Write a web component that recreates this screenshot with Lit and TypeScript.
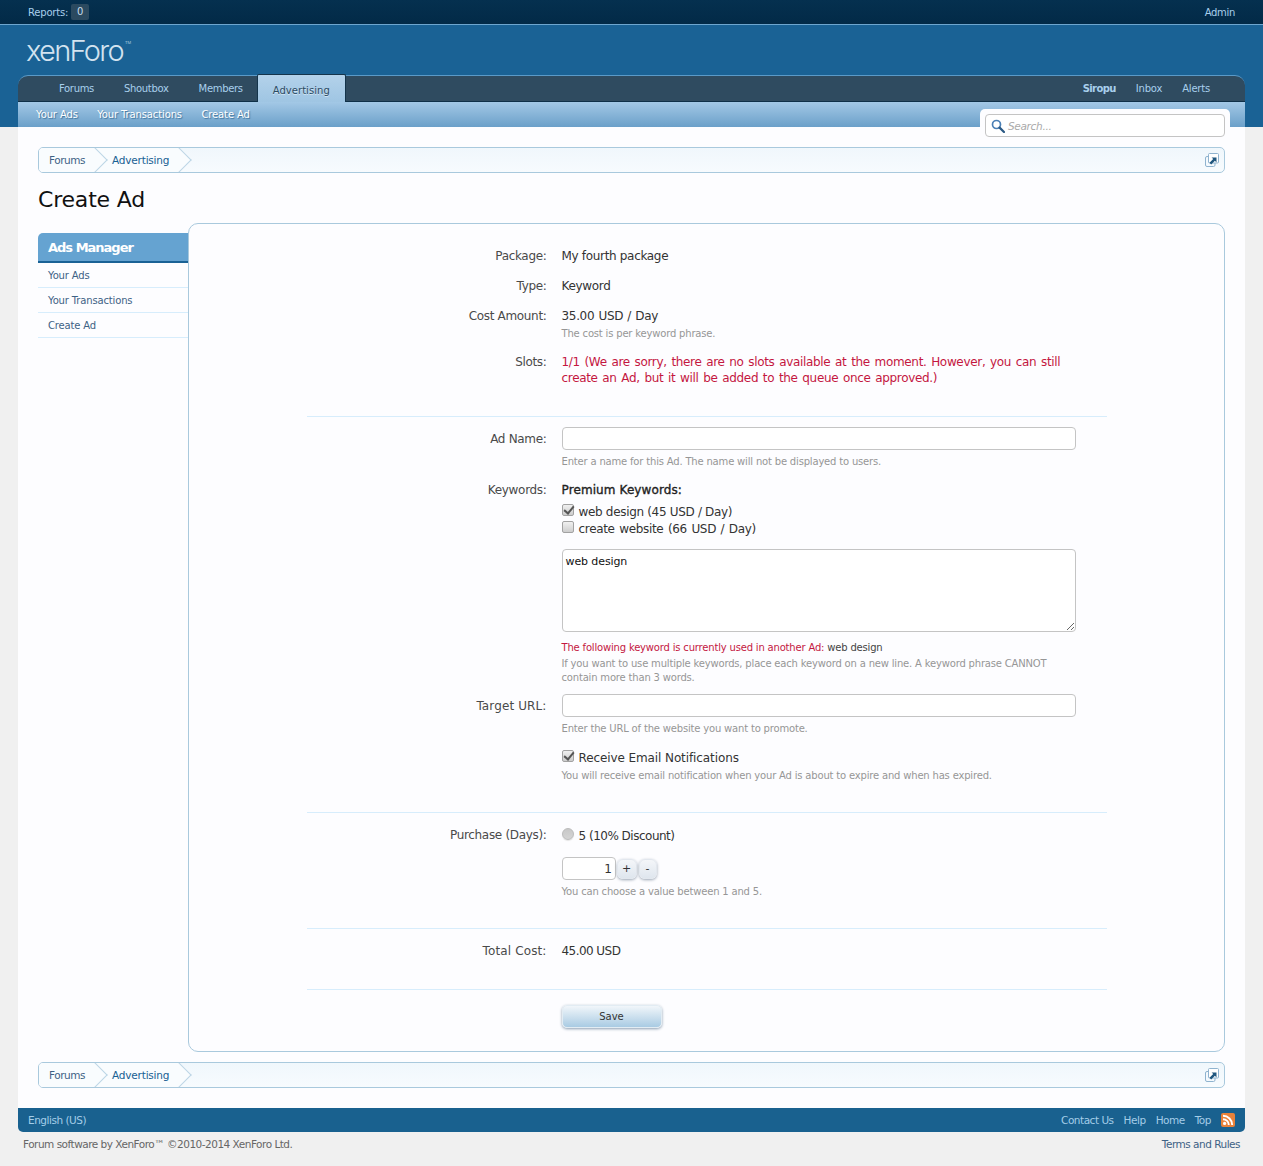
import { LitElement, html, css } from 'lit';
import { customElement } from 'lit/decorators.js';

const extIcon = html`<svg class="ext" width="14" height="14" viewBox="0 0 14 14">
  <rect x="0.5" y="3.5" width="9.5" height="10" rx="1.5" fill="#f4f9fd" stroke="#8fb3cf"/>
  <rect x="3.5" y="0.5" width="10" height="9.5" rx="1" fill="#fff" stroke="#8fb3cf"/>
  <path d="M4.5 9.8 8.2 6.1 6.6 4.5H11.5V9.4L9.9 7.8 6.2 11.5Z" fill="#20577f"/>
</svg>`;

@customElement('app-root')
export class AppRoot extends LitElement {
  static styles = css`
    :host {
      display: block;
      min-height: 1166px;
      background: #f0f0f0;
      font-family: 'DejaVu Sans', Tahoma, sans-serif;
      font-size: 12px;
      letter-spacing: -0.32px;
      color: #333;
    }
    a { color: inherit; text-decoration: none; }

    .topbar {
      height: 24px;
      display: flex;
      align-items: center;
      justify-content: space-between;
      padding: 0 28px;
      background: linear-gradient(#05304f, #022a47);
      border-bottom: 1px solid #6ea6cf;
      color: #a8cfec;
      font-size: 10px;
    }
    .reports { display: flex; align-items: center; gap: 3px; letter-spacing: -0.2px; }
    .badge {
      background: #2b4a60;
      color: #c5dced;
      border-radius: 2px;
      width: 18px;
      height: 16px;
      line-height: 16px;
      text-align: center;
    }

    .header { background: #1a6295; height: 102px; padding: 0 18px; position: relative; }
    .logo {
      height: 50px;
      padding: 2px 0 0 8px;
      box-sizing: border-box;
      font-family: Inter, sans-serif;
      font-weight: 300;
      font-size: 29px;
      letter-spacing: -1.7px;
      line-height: 32px;
      color: #d3e3f0;
    }
    .logo sup { font-size: 4px; letter-spacing: 0; vertical-align: 17px; margin-left: 2px; }
    .tabs {
      height: 27px;
      box-sizing: border-box;
      background: #2f4b60;
      border-radius: 10px 10px 0 0;
      border-top: 1px solid #5a9ac8;
      border-bottom: 1px solid #0f3048;
      display: flex;
      align-items: stretch;
      justify-content: space-between;
      padding-left: 26px;
      padding-right: 35px;
      color: #a8cfec;
      font-size: 10px;
      position: relative;
    }
    .tabs .left { display: flex; }
    .tabs .left a { padding: 0 15px; display: flex; align-items: center; }
    .tabs .left a.active {
      margin: -2px 0 -1px -1px;
      padding: 3px 15px 0;
      background: linear-gradient(#b3d2ea, #9fc5e3);
      border: 1px solid #14344b;
      border-bottom: none;
      border-radius: 2px 2px 0 0;
      color: #2b4a62;
      letter-spacing: 0.05px;
      text-shadow: 0 1px 0 #d4e6f4;
    }
    .tabs .right { display: flex; align-items: center; gap: 20px; letter-spacing: -0.2px; }
    .tabs .right b { letter-spacing: -0.6px; }
    .subnav {
      height: 25px;
      background: linear-gradient(#a3c8e6, #6ba0c9);
      display: flex;
      align-items: center;
      gap: 19.5px;
      padding-left: 18px;
      color: #fff;
      font-size: 10px;
      letter-spacing: -0.13px;
      text-shadow: 1px 1px 1px #3d729b;
    }
    .searchTab {
      position: absolute;
      right: 33px;
      top: 84px;
      width: 240px;
      padding: 5px;
      background: #fdfdff;
      border-radius: 5px 5px 0 0;
    }
    .search {
      height: 23px;
      box-sizing: border-box;
      background: #fff;
      border: 1px solid #c4c4c4;
      border-radius: 4px;
      display: flex;
      align-items: center;
      gap: 3px;
      padding-left: 5px;
      color: #aaa;
      font-style: italic;
      font-size: 10.5px;
    }

    .page {
      margin: 0 18px;
      background: #fdfdff;
      padding: 20px;
    }
    .crumbs {
      height: 26px;
      box-sizing: border-box;
      border: 1px solid #a9c9dd;
      border-radius: 5px;
      background: linear-gradient(#f0f7fc, #f7fbfe);
      display: flex;
      align-items: center;
      justify-content: space-between;
      overflow: hidden;
      padding-right: 5px;
    }
    .crumbs .items { display: flex; height: 24px; }
    .crumb {
      position: relative;
      isolation: isolate;
      padding: 0 10px 0 17px;
      line-height: 24px;
      font-size: 10.5px;
      letter-spacing: -0.2px;
      color: #176093;
      background: #f9fcfe;
    }
    .crumb:first-child { padding-left: 10px; letter-spacing: -0.45px; color: #3e6285; z-index: 2; }
    .crumb::after {
      content: '';
      position: absolute;
      z-index: -1;
      right: -9px;
      top: 3px;
      width: 17px;
      height: 17px;
      background: inherit;
      border-top: 1px solid #bcd5e6;
      border-right: 1px solid #bcd5e6;
      transform: rotate(45deg);
    }
    .ext { display: block; }

    h1 {
      margin: 0;
      padding-top: 12px;
      height: 50px;
      box-sizing: border-box;
      font-weight: 400;
      font-size: 22px;
      line-height: 30px;
      letter-spacing: -0.2px;
      color: #111;
    }

    .cols { display: flex; align-items: flex-start; }
    .side { width: 150px; flex: none; margin-top: 10px; }
    .side h3 {
      margin: 0;
      height: 30px;
      box-sizing: border-box;
      padding-left: 10px;
      background: #65a3d1;
      border-bottom: 2px solid #1a6295;
      border-radius: 5px 0 0 0;
      color: #fff;
      font-size: 13px;
      font-weight: 700;
      letter-spacing: -1px;
      line-height: 30px;
    }
    .side a {
      display: block;
      height: 25px;
      box-sizing: border-box;
      padding-left: 10px;
      line-height: 25px;
      font-size: 10px;
      letter-spacing: -0.15px;
      color: #3e6285;
      border-bottom: 1px solid #d7edfc;
    }

    .panel {
      flex: 1;
      height: 829px;
      box-sizing: border-box;
      background: #fdfdff;
      border: 1px solid #a9c9dd;
      border-radius: 10px;
      padding-top: 24px;
    }
    .form { width: 800px; margin: 0 auto; }
    .row {
      display: grid;
      grid-template-columns: 240px 514px;
      column-gap: 15px;
      line-height: 16px;
      margin-top: 14px;
    }
    .row:first-child { margin-top: 0; }
    .row.keywords, .row.notify, .row.slots { margin-top: 13px; }
    .row.target { margin-top: 9px; }
    .lab { text-align: right; color: #4a4a4a; }
    .lab.down { padding-top: 4px; }
    .lab.loose { letter-spacing: 0.12px; }
    .val { color: #333; white-space: nowrap; }
    .hint {
      color: #969696;
      font-size: 10px;
      letter-spacing: -0.18px;
      line-height: 14px;
      margin-top: 3px;
    }
    .hint.under { margin-top: 5px; }
    .hint.tight { margin-top: 2px; }
    .hint.gap { margin-top: 9px; }
    .dark { color: #444; }
    .err { color: #c4173f; }
    .slots .val { word-spacing: 1.15px; }
    .cost { word-spacing: 0.7px; }
    .total { letter-spacing: -0.55px; }
    hr { border: none; border-top: 1px solid #d7edfc; margin: 30px 0 0; }
    hr.short { margin-top: 29px; }
    hr + .row { margin-top: 14px; }
    hr + .row.first { margin-top: 10px; }
    hr + .row.save-row { margin-top: 15px; }
    .field {
      display: block;
      width: 514px;
      height: 23px;
      box-sizing: border-box;
      background: #fff;
      border: 1px solid #c4c4c4;
      border-radius: 4px;
    }
    .area {
      height: 83px;
      margin-top: 12px;
      padding: 4px 3px 3px;
      font: inherit;
      font-size: 11px;
      letter-spacing: -0.1px;
      color: #111;
      line-height: 16px;
      outline: none;
      resize: vertical;
    }
    .premium {
      color: #222;
      margin-bottom: 5px;
      letter-spacing: 0.1px;
      -webkit-text-stroke: 0.35px #222;
    }
    .check { display: flex; align-items: center; gap: 5px; height: 17px; }
    .check.wide { word-spacing: 1px; }
    .check.roomy { letter-spacing: -0.1px; }
    .check.tight { letter-spacing: -0.5px; }
    input[type='checkbox'], input[type='radio'] {
      appearance: none;
      margin: 0 0 3px;
      width: 12px;
      height: 12px;
      box-sizing: border-box;
      background: linear-gradient(#f0f0f0, #cdcdcd);
      border: 1px solid #a2a2a2;
      border-radius: 2px;
      position: relative;
      flex: none;
    }
    input[type='radio'] {
      border-radius: 50%;
      border-color: #bbb;
      background: linear-gradient(#c8c8c8, #d4d4d4);
      box-shadow: 0 1px 1px #e4e4e4;
    }
    input:checked::after {
      content: '';
      position: absolute;
      left: 3px;
      top: -1px;
      width: 4px;
      height: 8px;
      border: solid #555;
      border-width: 0 2px 2px 0;
      transform: rotate(40deg);
    }
    .spin { display: flex; align-items: center; margin-top: 13px; }
    .spin .num {
      width: 54px;
      height: 23px;
      box-sizing: border-box;
      background: #fff;
      border: 1px solid #c4c4c4;
      border-radius: 4px;
      text-align: right;
      padding-right: 3px;
      line-height: 23px;
      color: #333;
    }
    .spin button {
      height: 20px;
      margin-left: 1px;
      padding: 0;
      font: inherit;
      font-size: 11px;
      color: #333;
      background: linear-gradient(#f4f6f9, #dfe6ee);
      border: 1px solid #e2e7ee;
      border-radius: 6px;
      box-shadow: 0 1px 3px #9aa5b3;
    }
    .spin button.plus { width: 20px; }
    .spin button.minus { width: 18px; margin-left: 2px; }
    .save {
      display: block;
      width: 100px;
      height: 23px;
      padding: 0;
      font: inherit;
      font-size: 10px;
      color: #333;
      background: linear-gradient(#f1f6fa, #a9cbe3);
      border: 1px solid #e2ecf3;
      border-radius: 5px;
      box-shadow: 0 1px 3px #8a9db0;
    }
    .spacer { height: 10px; }

    .footer {
      margin: 0 18px;
      height: 24px;
      background: #19618f;
      border-radius: 0 0 5px 5px;
      display: flex;
      align-items: center;
      justify-content: space-between;
      padding: 0 10px;
      color: #a4cde8;
      font-size: 10.5px;
      letter-spacing: -0.48px;
    }
    .footer .links { display: flex; align-items: center; gap: 10px; }
    .rss { display: block; }
    .legal {
      display: flex;
      justify-content: space-between;
      padding: 5px 23px 0;
      font-size: 10.5px;
      letter-spacing: -0.5px;
      line-height: 14px;
      color: #666;
    }
    .legal a { color: #3e6285; }
  `;

  private crumbs() {
    return html`<div class="crumbs">
      <div class="items">
        <a class="crumb" href="#">Forums</a>
        <a class="crumb" href="#">Advertising</a>
      </div>
      ${extIcon}
    </div>`;
  }

  render() {
    return html`
      <div class="topbar">
        <div class="reports"><span>Reports:</span><span class="badge">0</span></div>
        <a href="#">Admin</a>
      </div>
      <div class="header">
        <div class="logo">xenForo<sup>TM</sup></div>
        <div class="tabs">
          <div class="left">
            <a href="#">Forums</a>
            <a href="#">Shoutbox</a>
            <a href="#">Members</a>
            <a href="#" class="active">Advertising</a>
          </div>
          <div class="right">
            <a href="#"><b>Siropu</b></a>
            <a href="#">Inbox</a>
            <a href="#">Alerts</a>
          </div>
        </div>
        <div class="subnav">
          <a href="#">Your Ads</a>
          <a href="#">Your Transactions</a>
          <a href="#">Create Ad</a>
        </div>
        <div class="searchTab">
          <div class="search">
            <svg width="14" height="14" viewBox="0 0 14 14" fill="none">
              <circle cx="5.5" cy="5.5" r="4" stroke="#4a7fb5" stroke-width="1.7"/>
              <path d="M8.6 8.6 13 13" stroke="#2c5a85" stroke-width="2.2" stroke-linecap="round"/>
            </svg>
            <span>Search...</span>
          </div>
        </div>
      </div>

      <div class="page">
        ${this.crumbs()}
        <h1>Create Ad</h1>
        <div class="cols">
          <div class="side">
            <h3>Ads Manager</h3>
            <a href="#">Your Ads</a>
            <a href="#">Your Transactions</a>
            <a href="#">Create Ad</a>
          </div>
          <div class="panel">
            <div class="form">
              <div class="row"><div class="lab">Package:</div><div class="val">My fourth package</div></div>
              <div class="row"><div class="lab">Type:</div><div class="val">Keyword</div></div>
              <div class="row"><div class="lab">Cost Amount:</div>
                <div class="val"><span class="cost">35.00 USD / Day</span><div class="hint">The cost is per keyword phrase.</div></div></div>
              <div class="row slots"><div class="lab">Slots:</div>
                <div class="val err">1/1 (We are sorry, there are no slots available at the moment. However, you can still<br>create an Ad, but it will be added to the queue once approved.)</div></div>
              <hr>

              <div class="row first"><div class="lab down">Ad Name:</div>
                <div class="val"><div class="field"></div><div class="hint under">Enter a name for this Ad. The name will not be displayed to users.</div></div></div>

              <div class="row keywords"><div class="lab">Keywords:</div>
                <div class="val">
                  <div class="premium">Premium Keywords:</div>
                  <label class="check"><input type="checkbox" checked>web design (45 USD / Day)</label>
                  <label class="check wide"><input type="checkbox">create website (66 USD / Day)</label>
                  <textarea class="field area">web design</textarea>
                  <div class="hint gap"><span class="err">The following keyword is currently used in another Ad:</span> <span class="dark">web design</span></div>
                  <div class="hint tight">If you want to use multiple keywords, place each keyword on a new line. A keyword phrase CANNOT<br>contain more than 3 words.</div>
                </div></div>

              <div class="row target"><div class="lab down loose">Target URL:</div>
                <div class="val"><div class="field"></div><div class="hint under">Enter the URL of the website you want to promote.</div></div></div>

              <div class="row notify"><div></div>
                <div class="val">
                  <label class="check roomy"><input type="checkbox" checked>Receive Email Notifications</label>
                  <div class="hint">You will receive email notification when your Ad is about to expire and when has expired.</div>
                </div></div>
              <hr class="short">

              <div class="row"><div class="lab">Purchase (Days):</div>
                <div class="val">
                  <label class="check tight"><input type="radio">5 (10% Discount)</label>
                  <div class="spin"><div class="num">1</div><button class="plus">+</button><button class="minus">-</button></div>
                  <div class="hint under">You can choose a value between 1 and 5.</div>
                </div></div>
              <hr class="short">

              <div class="row"><div class="lab loose">Total Cost:</div><div class="val total">45.00 USD</div></div>
              <hr>

              <div class="row save-row"><div></div><div class="val"><button class="save">Save</button></div></div>
            </div>
          </div>
        </div>
        <div class="spacer"></div>
        ${this.crumbs()}
      </div>

      <div class="footer">
        <a href="#">English (US)</a>
        <div class="links">
          <a href="#">Contact Us</a>
          <a href="#">Help</a>
          <a href="#">Home</a>
          <a href="#">Top</a>
          <svg class="rss" width="14" height="14" viewBox="0 0 14 14">
            <rect width="14" height="14" rx="2" fill="#e8823a"/>
            <circle cx="3.6" cy="10.4" r="1.6" fill="#fff"/>
            <path d="M2 6.2a5.8 5.8 0 0 1 5.8 5.8M2 2.8a9.2 9.2 0 0 1 9.2 9.2" fill="none" stroke="#fff" stroke-width="1.9"/>
          </svg>
        </div>
      </div>
      <div class="legal">
        <span>Forum software by XenForo™ ©2010-2014 XenForo Ltd.</span>
        <a href="#">Terms and Rules</a>
      </div>
    `;
  }
}
